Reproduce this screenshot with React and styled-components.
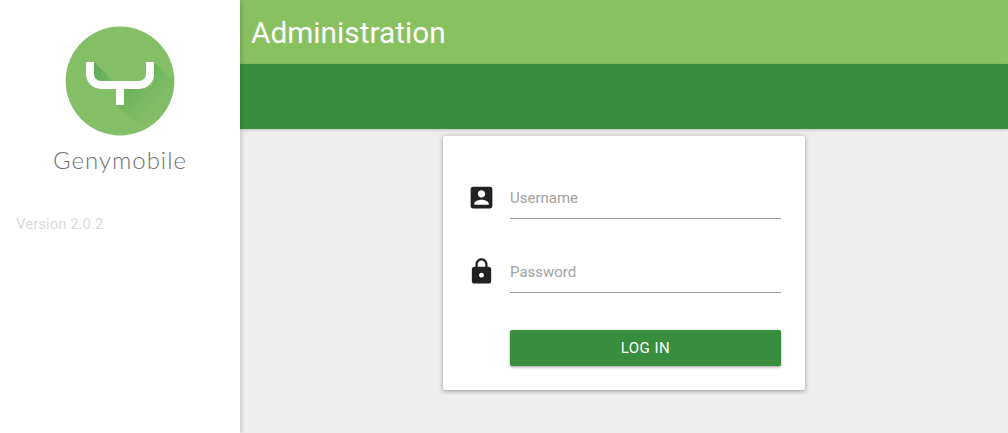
import React from "react";
import styled, { createGlobalStyle } from "styled-components";

const GlobalStyle = createGlobalStyle`
  html, body {
    margin: 0;
    height: 100%;
    overflow: hidden;
    background: #eeeeee;
    font-family: Roboto, "Liberation Sans", sans-serif;
  }
`;

const Logo = () => (
  <LogoSvg viewBox="0 0 110 110" width="110" height="110">
    <defs>
      <linearGradient id="longShadow" x1="0.2" y1="0.2" x2="0.8" y2="0.8">
        <stop offset="0" stopColor="#4fa550" stopOpacity="0.6" />
        <stop offset="1" stopColor="#84bf68" stopOpacity="0" />
      </linearGradient>
      <linearGradient id="innerShadow" x1="0" y1="0" x2="1" y2="0">
        <stop offset="0" stopColor="#5cab58" />
        <stop offset="1" stopColor="#7ab965" />
      </linearGradient>
      <clipPath id="disc">
        <circle cx="55" cy="55" r="54.4" />
      </clipPath>
    </defs>
    <circle cx="55" cy="55" r="54.4" fill="#84bf68" />
    <g clipPath="url(#disc)">
      <path d="M29 36 L48 55 H29 Z" fill="url(#innerShadow)" />
      <path d="M89 36 L125 72 L90 112 L51 79 H59 V63 H80 A9 9 0 0 0 89 54 Z" fill="url(#longShadow)" />
    </g>
    <path
      d="M25 36 V48 A11 11 0 0 0 36 59 H74 A11 11 0 0 0 85 48 V36 M55 59 V79"
      fill="none"
      stroke="#fff"
      strokeWidth="8"
    />
  </LogoSvg>
);

const AccountIcon = () => (
  <FieldIcon viewBox="0 0 24 24">
    <path d="M3 5v14c0 1.1.89 2 2 2h14c1.1 0 2-.9 2-2V5c0-1.1-.9-2-2-2H5c-1.11 0-2 .9-2 2zm12 4c0 1.66-1.34 3-3 3s-3-1.34-3-3 1.34-3 3-3 3 1.34 3 3zm-9 8c0-2 4-3.1 6-3.1s6 1.1 6 3.1v1H6v-1z" />
  </FieldIcon>
);

const LockIcon = () => (
  <FieldIcon viewBox="0 0 24 24">
    <path d="M18 8h-1V6c0-2.76-2.24-5-5-5S7 3.24 7 6v2H6c-1.1 0-2 .9-2 2v10c0 1.1.9 2 2 2h12c1.1 0 2-.9 2-2V10c0-1.1-.9-2-2-2zm-6 9c-1.1 0-2-.9-2-2s.9-2 2-2 2 .9 2 2-.9 2-2 2zm3.1-9H8.9V6c0-1.71 1.39-3.1 3.1-3.1 1.71 0 3.1 1.39 3.1 3.1v2z" />
  </FieldIcon>
);

const App = () => {
  return (
    <Page>
      <GlobalStyle />
      <Sidebar>
        <Brand>
          <Logo />
          <BrandName>Genymobile</BrandName>
        </Brand>
        <Version>Version 2.0.2</Version>
      </Sidebar>
      <Main>
        <Header>
          <Title>Administration</Title>
        </Header>
        <SubHeader />
        <LoginCard>
          <Field>
            <AccountIcon />
            <Input type="text" placeholder="Username" />
          </Field>
          <Field>
            <LockIcon />
            <Input type="password" placeholder="Password" />
          </Field>
          <LoginButton type="button">LOG IN</LoginButton>
        </LoginCard>
      </Main>
    </Page>
  );
};
export default App;

const Page = styled.div`
  display: flex;
  height: 100vh;
`;

const Sidebar = styled.aside`
  position: relative;
  z-index: 2;
  flex: 0 0 240px;
  background: #fff;
  box-shadow: 2px 0 4px rgba(0, 0, 0, 0.14);
`;

const Brand = styled.div`
  display: flex;
  flex-direction: column;
  align-items: center;
  padding-top: 26px;
`;

const LogoSvg = styled.svg`
  display: block;
`;

const BrandName = styled.div`
  margin-top: 9px;
  font-family: Lato, sans-serif;
  font-weight: 300;
  font-size: 24px;
  line-height: 30px;
  letter-spacing: 1px;
  color: #707070;
`;

const Version = styled.div`
  margin-top: 39px;
  padding-left: 16px;
  font-size: 15px;
  line-height: 20px;
  color: #dadada;
`;

const Main = styled.main`
  flex: 1;
  display: flex;
  flex-direction: column;
  align-items: center;
  min-width: 0;
`;

const Header = styled.header`
  align-self: stretch;
  height: 64px;
  display: flex;
  align-items: center;
  padding-left: 11px;
  background: #89c060;
`;

const Title = styled.h1`
  margin: 0;
  font-size: 29.8px;
  font-weight: 400;
  color: #fff;
`;

const SubHeader = styled.div`
  align-self: stretch;
  height: 65px;
  background: #388e3c;
  box-shadow: 0 1px 3px rgba(0, 0, 0, 0.2);
`;

const LoginCard = styled.form`
  box-sizing: border-box;
  width: 362px;
  height: 254px;
  margin-top: 7px;
  padding: 25px 24px 0;
  background: #fff;
  border-radius: 2px;
  box-shadow: 0 1px 4px rgba(0, 0, 0, 0.4);
`;

const Field = styled.div`
  display: flex;
  align-items: flex-end;
  gap: 14px;
  height: 58px;
  margin-bottom: 16px;
`;

const FieldIcon = styled.svg`
  flex: none;
  width: 29px;
  height: 29px;
  margin-bottom: 7px;
  fill: #212121;
`;

const Input = styled.input`
  flex: 1;
  min-width: 0;
  height: 58px;
  padding: 17px 0 0;
  box-sizing: border-box;
  border: none;
  border-bottom: 1px solid #9e9e9e;
  outline: none;
  font-family: inherit;
  font-size: 15px;
  background: transparent;

  &::placeholder {
    color: #a2a2a2;
    opacity: 1;
  }
`;

const LoginButton = styled.button`
  display: block;
  width: 271px;
  height: 36px;
  margin: 37px 0 0 43px;
  border: none;
  border-radius: 2px;
  background: #388e3c;
  color: #fff;
  font-family: inherit;
  font-size: 15px;
  letter-spacing: 0.5px;
  box-shadow: 0 1px 3px rgba(0, 0, 0, 0.4);
`;
